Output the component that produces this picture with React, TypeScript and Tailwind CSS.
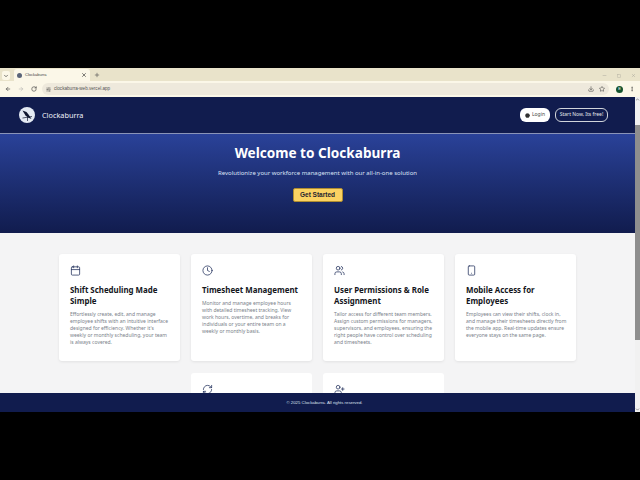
import { ArrowLeft, ArrowRight, Calendar, ChevronDown, ChevronUp, Clock, Download, EllipsisVertical, Minus, Plus, RefreshCw, RotateCw, Smartphone, Square, Star, UserPlus, Users, X, SlidersHorizontal, CircleUser } from 'lucide-react'

const features = [
  {
    icon: Calendar,
    title: 'Shift Scheduling Made Simple',
    text: "Effortlessly create, edit, and manage\nemployee shifts with an intuitive interface\ndesigned for efficiency. Whether it's\nweekly or monthly scheduling, your team\nis always covered.",
  },
  {
    icon: Clock,
    title: 'Timesheet Management',
    text: 'Monitor and manage employee hours\nwith detailed timesheet tracking. View\nwork hours, overtime, and breaks for\nindividuals or your entire team on a\nweekly or monthly basis.',
  },
  {
    icon: Users,
    title: 'User Permissions & Role Assignment',
    text: 'Tailor access for different team members.\nAssign custom permissions for managers,\nsupervisors, and employees, ensuring the\nright people have control over scheduling\nand timesheets.',
  },
  {
    icon: Smartphone,
    title: 'Mobile Access for Employees',
    text: 'Employees can view their shifts, clock in,\nand manage their timesheets directly from\nthe mobile app. Real-time updates ensure\neveryone stays on the same page.',
  },
]

function Logo() {
  return (
    <svg width="16" height="16" viewBox="0 0 16 16" className="shrink-0">
      <circle cx="8" cy="8" r="8" fill="#e4eaf3" />
      <path d="M3.5 3.5 L7.5 5 L9.5 7.5 L12.5 12 L9 10.5 L6.5 8.5 Z" fill="#10172f" />
      <path d="M8.5 9.5 L8.5 14 M3.5 11 L13 9.5" stroke="#10172f" strokeWidth="0.7" />
    </svg>
  )
}

function BrowserChrome() {
  return (
    <div className="shrink-0 font-['Liberation_Sans',sans-serif]">
      <div className="flex h-[13px] items-end bg-[#e9e3ca] pl-[2px]">
        <div className="mb-[1px] mr-[4px] flex h-[9px] w-[8px] items-center justify-center rounded-[2px] bg-[#fbf7e8]">
          <ChevronDown size={6} strokeWidth={2.5} color="#333" />
        </div>
        <div className="flex h-[12px] w-[76px] items-center gap-[3px] rounded-t-[3px] bg-[#fbf7e8] px-[3px]">
          <div className="h-[5px] w-[5px] rounded-full bg-[#5a6478]" />
          <span className="flex-1 text-[4px] text-[#444]">Clockaburra</span>
          <X size={6} strokeWidth={2.5} color="#333" />
        </div>
        <Plus size={6} strokeWidth={2.5} color="#555" className="mb-[3px] ml-[4px]" />
        <div className="mb-[3px] ml-auto mr-[4px] flex items-center gap-[10px] opacity-60">
          <Minus size={5} color="#777" />
          <Square size={4} color="#777" />
          <X size={5} color="#777" />
        </div>
      </div>
      <div className="flex h-[16px] items-center bg-[#fbf7e8] pl-[5px] pr-[5px]">
        <ArrowLeft size={6} strokeWidth={2.5} color="#444" />
        <ArrowRight size={6} strokeWidth={2} color="#aaa" className="ml-[7px]" />
        <RotateCw size={6} strokeWidth={2.5} color="#444" className="ml-[7px]" />
        <div className="ml-[5px] flex h-[12px] flex-1 items-center rounded-full bg-[#eee9dc] pl-[4px] pr-[4px]">
          <SlidersHorizontal size={5} color="#444" />
          <span className="ml-[3px] text-[4.6px] text-[#555]">clockaburra-web.vercel.app</span>
          <Download size={6} color="#333" className="ml-auto" />
          <Star size={6} color="#333" className="ml-[5px]" />
        </div>
        <div className="ml-[7px] flex h-[7px] w-[7px] items-center justify-center rounded-full bg-[#14532d] text-[4px] text-white">
          E
        </div>
        <EllipsisVertical size={6} color="#333" className="ml-[6px]" />
      </div>
    </div>
  )
}

function FeatureCard({ icon: Icon, title, text }: { icon: typeof Calendar; title: string; text: string }) {
  return (
    <div className="h-[107px] rounded-[3px] bg-white pl-[11px] pr-[10px] pt-[11px] shadow-[0_1px_3px_rgba(0,0,0,0.08)]">
      <Icon size={11} strokeWidth={1.7} color="#26355f" />
      <h3 className="mt-[9px] text-[7.9px] font-bold leading-[11px] text-[#14161c]">{title}</h3>
      <p className="mt-[4px] whitespace-pre text-[5px] leading-[7px] text-[#7a7f8a]">{text}</p>
    </div>
  )
}

export default function App() {
  return (
    <div className="flex h-[480px] w-[640px] flex-col overflow-hidden bg-black py-[68px] font-['Noto_Sans',sans-serif]">
      <BrowserChrome />
      <div className="flex min-h-0 flex-1">
        <div className="flex min-w-0 flex-1 flex-col">
          <header className="flex h-[37px] shrink-0 items-center justify-between border-b border-[#8a94b8] bg-[#111c4e] pl-[19px] pr-[27px]">
            <div className="flex items-center gap-[7px]">
              <Logo />
              <span className="text-[7.3px] text-[#eef1f8]">Clockaburra</span>
            </div>
            <div className="flex items-center gap-[5px]">
              <button className="flex h-[14px] w-[30px] items-center justify-center gap-[2px] rounded-[6px] bg-white text-[5px] text-[#444]">
                <CircleUser size={5} fill="#333" color="#333" />
                Login
              </button>
              <button className="flex h-[14px] w-[53px] items-center justify-center rounded-[6px] border border-[#d1d5db] text-[5px] text-[#e5e7eb]">
                Start Now, Its free!
              </button>
            </div>
          </header>
          <section className="flex h-[99px] shrink-0 flex-col items-center bg-gradient-to-b from-[#2a4299] to-[#111c4e] pt-[10px]">
            <h1 className="text-[13.6px] font-bold leading-[18px] text-white">Welcome to Clockaburra</h1>
            <p className="mt-[7px] text-[6px] leading-[9px] text-[#dbe2f5]">
              Revolutionize your workforce management with our all-in-one solution
            </p>
            <button className="mt-[10px] flex h-[14px] w-[50px] items-center justify-center rounded-[2px] border border-[#b08d30] bg-[#fbd262] font-['Liberation_Sans',sans-serif] text-[6.5px] font-semibold text-[#1f2430]">
              Get Started
            </button>
          </section>
          <main className="min-h-0 flex-1 overflow-hidden bg-[#f4f4f5] pt-[21px]">
            <div className="mx-auto grid w-[517px] grid-cols-4 gap-x-[11px] gap-y-[12px]">
              {features.map((f) => (
                <FeatureCard key={f.title} {...f} />
              ))}
              <div className="col-start-2 h-[40px] rounded-[3px] bg-white px-[11px] pt-[11px]">
                <RefreshCw size={11} strokeWidth={1.7} color="#26355f" />
              </div>
              <div className="h-[40px] rounded-[3px] bg-white px-[11px] pt-[11px]">
                <UserPlus size={11} strokeWidth={1.7} color="#26355f" />
              </div>
            </div>
          </main>
          <footer className="flex h-[19px] shrink-0 items-center justify-center bg-[#111c4e] pl-[14px] pt-[1px] font-['Liberation_Sans',sans-serif] text-[4.3px] text-[#dfe3ee]">
            © 2025 Clockaburra. All rights reserved.
          </footer>
        </div>
        <div className="flex w-[5px] shrink-0 flex-col items-center bg-[#f1f1f1]">
          <ChevronUp size={5} strokeWidth={3} color="#666" />
          <div className="mt-[23px] h-[215px] w-full bg-[#8e8e8e]" />
          <ChevronDown size={5} strokeWidth={3} color="#666" className="mt-auto" />
        </div>
      </div>
    </div>
  )
}
